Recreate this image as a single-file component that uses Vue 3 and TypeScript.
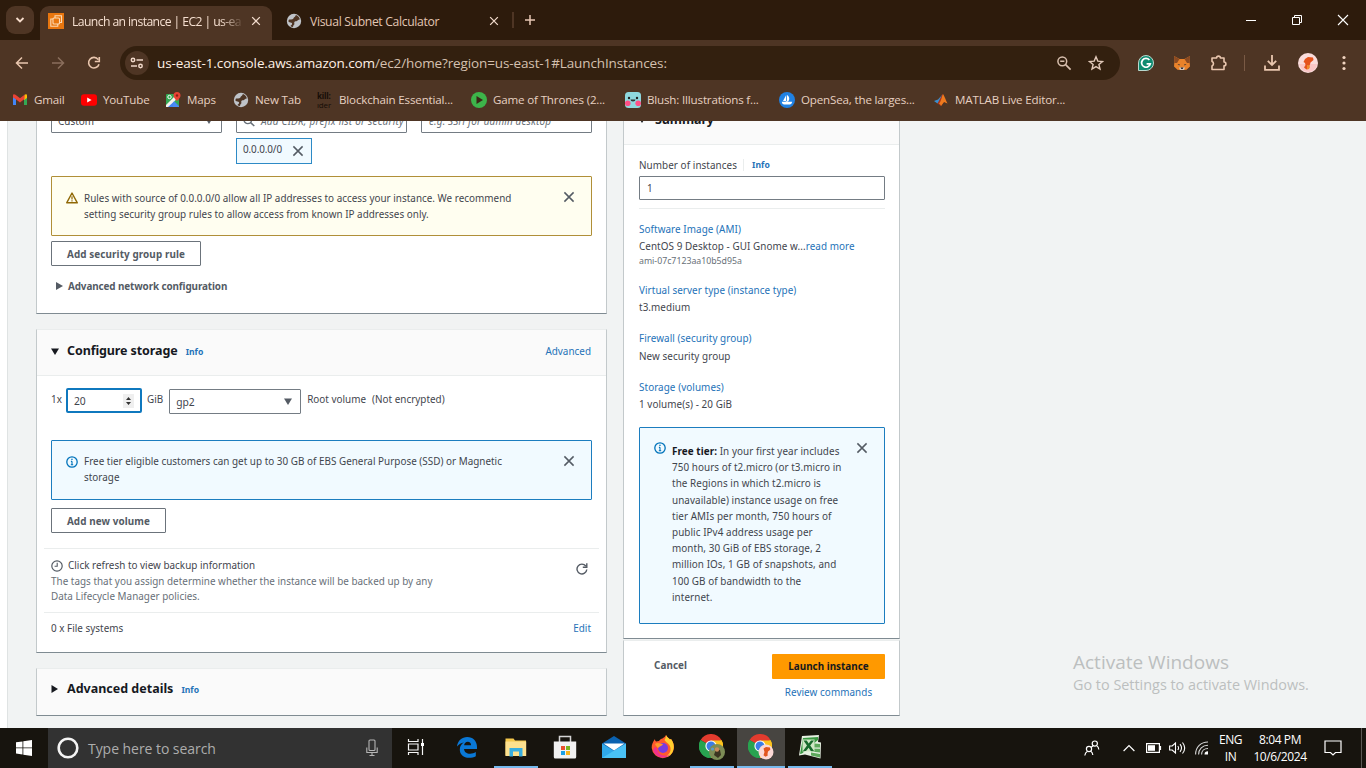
<script setup lang="ts">
interface Field {
  label: string
  value: string
  more?: string
  sub?: string
  cls: string
}

const fields: Field[] = [
  { label: 'Software Image (AMI)', value: 'CentOS 9 Desktop - GUI Gnome w...', more: 'read more', sub: 'ami-07c7123aa10b5d95a', cls: 'f-ami' },
  { label: 'Virtual server type (instance type)', value: 't3.medium', cls: 'f-type' },
  { label: 'Firewall (security group)', value: 'New security group', cls: 'f-fw' },
  { label: 'Storage (volumes)', value: '1 volume(s) - 20 GiB', cls: 'f-vol' },
]

const freeTier: string[] = [
  '750 hours of t2.micro (or t3.micro in',
  'the Regions in which t2.micro is',
  'unavailable) instance usage on free',
  'tier AMIs per month, 750 hours of',
  'public IPv4 address usage per',
  'month, 30 GiB of EBS storage, 2',
  'million IOs, 1 GB of snapshots, and',
  '100 GB of bandwidth to the',
  'internet.',
]
</script>

<template>
  <div class="screen">
    <svg class="defs" width="0" height="0" aria-hidden="true">
      <symbol id="i-close" viewBox="0 0 12 12"><path d="M1.4 1.4l9.2 9.2M10.6 1.4l-9.2 9.2" fill="none" stroke="currentColor" stroke-width="1.5" /></symbol>
      <symbol id="i-info" viewBox="0 0 12 12"><circle cx="6" cy="6" r="5.2" fill="none" stroke="#0073bb" stroke-width="1.3" /><path d="M6 5.2v3.6M4.9 5.4H6M4.8 8.8h2.4" stroke="#0073bb" stroke-width="1.1" fill="none" /><rect x="5.3" y="2.7" width="1.3" height="1.3" fill="#0073bb" /></symbol>
      <symbol id="i-globe" viewBox="0 0 16 16"><circle cx="8" cy="8" r="7.2" fill="#bfc3c8" /><path d="M2.600 7C3.500 5.800 5 6.800 6.500 6.300 7.800 5.800 7.300 4.600 8.600 4 9.600 3.500 9.300 2.600 10 2 12 2.800 13.500 4.500 13.900 6.600 12.800 6.500 12 7.200 11.300 7.800 10.300 8.600 8.800 8 8.300 9.200 7.900 10.300 9 10.900 8 11.800 7.200 12.500 7.300 13.300 6.900 14 5.800 13.800 5 13.400 4.400 12.900 5.500 12.200 6.400 11.400 6 10.300 5.600 9.200 3.600 9.600 2.500 8.800Z" fill="#4e3524" /></symbol>
      <symbol id="i-chrome" viewBox="0 0 24 24"><path d="M12 12 1.600 6A12 12 0 0 1 22.400 6Z" fill="#e33b2e" /><path d="M12 12 22.400 6A12 12 0 0 1 12 24Z" fill="#fcc31e" /><path d="M12 12V24A12 12 0 0 1 1.600 6Z" fill="#28a350" /><path d="M12 6.500H22.700A12 12 0 0 1 12 24l4.800-9.300Z" fill="#fcc31e" /><path d="M1.600 6 7 15l5 3-2 6A12 12 0 0 1 1.600 6Z" fill="#28a350" /><circle cx="12" cy="12" r="5.600" fill="#fff" /><circle cx="12" cy="12" r="4.500" fill="#3c7de6" /></symbol>
    </svg>

    <header class="chrome">
      <div class="tabstrip">
        <div class="tabsearch">
          <svg width="10" height="8" viewBox="0 0 10 8"><path d="M1.500 2l3.500 3.500L8.500 2" fill="none" stroke="#f6dccb" stroke-width="1.800" /></svg>
        </div>
        <div class="tab active">
          <svg class="ec2" width="16" height="16" viewBox="0 0 16 16">
            <rect width="16" height="16" fill="#e8760f" /><path d="M5 6H2.800v7.200h7V11M7 5V2.800h6.500v6.700H11.500" fill="none" stroke="#fbd9b4" stroke-width="1.100" /><rect x="5" y="5" width="6.500" height="6" rx="1" fill="none" stroke="#fbd9b4" stroke-width="1.100" />
          </svg>
          <span class="ttl t-active">Launch an instance | EC2 | us-ea</span>
          <svg class="x" width="10" height="10"><use href="#i-close" /></svg>
        </div>
        <div class="tab idle">
          <svg width="16" height="16"><use href="#i-globe" /></svg>
          <span class="ttl t-idle">Visual Subnet Calculator</span>
          <svg class="x" width="10" height="10"><use href="#i-close" /></svg>
        </div>
        <i class="tabsep"></i>
        <svg class="plus" width="12" height="12" viewBox="0 0 12 12"><path d="M6 1v10M1 6h10" stroke="#e8c8b4" stroke-width="1.500" /></svg>
        <div class="winctl">
          <svg width="12" height="12" viewBox="0 0 12 12"><path d="M1 6.500h10" stroke="#fff" /></svg>
          <svg width="12" height="12" viewBox="0 0 12 12"><path d="M1.500 3.500h7v7h-7zM3.500 3.500v-2h7v7h-2" fill="none" stroke="#fff" /></svg>
          <svg width="12" height="12" viewBox="0 0 12 12"><path d="M1 1l10 10M11 1L1 11" stroke="#fff" stroke-width="1.100" /></svg>
        </div>
      </div>

      <div class="toolbar">
        <svg class="nav" width="14" height="14" viewBox="0 0 14 14"><path d="M13 7H2M7 1.500L1.500 7 7 12.500" fill="none" stroke="#e9c6ae" stroke-width="1.500" /></svg>
        <svg class="nav" width="14" height="14" viewBox="0 0 14 14"><path d="M1 7h11M7 1.500L12.500 7 7 12.500" fill="none" stroke="#8a6e5c" stroke-width="1.500" /></svg>
        <svg class="nav" width="14" height="14" viewBox="0 0 14 14"><path d="M12 8.200A5.300 5.300 0 1 1 11.200 3.600M12.300 1v4.500H7.800" fill="none" stroke="#e9c6ae" stroke-width="1.600" /></svg>
        <div class="omnibox">
          <span class="siteinfo">
            <svg width="14" height="12" viewBox="0 0 14 12"><g fill="none" stroke="#f1d9ca" stroke-width="1.500"><circle cx="3" cy="3" r="1.700" /><path d="M6.500 3H13" /><circle cx="10.500" cy="9" r="1.700" /><path d="M1 9h6" /></g></svg>
          </span>
          <span class="url"><b>us-east-1.console.aws.amazon.com</b>/ec2/home?region=us-east-1#LaunchInstances:</span>
          <svg class="mag" width="16" height="16" viewBox="0 0 16 16"><circle cx="6.300" cy="6.300" r="4.400" fill="none" stroke="#d8bfae" stroke-width="1.500" /><path d="M4.200 6.300h4.200M9.600 9.600l5 5" stroke="#d8bfae" stroke-width="1.600" /></svg>
          <svg width="16" height="16" viewBox="0 0 16 16"><path d="M8 1.800l1.800 4.300 4.700.4-3.600 3 1.100 4.600L8 11.600l-4 2.500 1.100-4.600-3.600-3 4.700-.4Z" fill="none" stroke="#e2c9b9" stroke-width="1.400" /></svg>
        </div>
        <svg class="e1" width="16" height="16" viewBox="0 0 16 16"><path d="M8 .5a7.500 7.500 0 1 1 0 15H.5V8A7.500 7.500 0 0 1 8 .5Z" fill="#0e8a70" stroke="#b9d8ce" /><path d="M11.400 5A4.400 4.400 0 1 0 12.300 8.800H8.600" fill="none" stroke="#fff" stroke-width="1.700" /></svg>
        <svg class="e2" width="18" height="16" viewBox="0 0 18 16"><path d="M1 1l5.500 3h5L17 1l-.3 7 .3 3.500-3.500 3.200L11 15H7l-2.500-.3L1 11.500 1.300 8Z" fill="#e9822a" /><path d="M1 1l5.500 3L4 8H1.300ZM17 1l-5.500 3L14 8h2.700Z" fill="#8a4a22" /><path d="M4.500 9l2.500.6-.8 1ZM13.500 9l-2.500.6.8 1Z" fill="#2b2b35" /><path d="M6 12.500h6L11 15H7Z" fill="#cfc3ba" /><path d="M7.700 12.500h2.600L9.800 14H8.200Z" fill="#2b2b35" /></svg>
        <svg class="e3" width="18" height="18" viewBox="0 0 18 18"><path d="M2 4h4.600a1.900 1.900 0 0 1 3.800 0H14v4a1.900 1.900 0 0 1 0 3.800V15.500H2v-3.600a2.300 2.300 0 0 0 0-4.300Z" fill="none" stroke="#e9c6ae" stroke-width="1.600" stroke-linejoin="round" /></svg>
        <i class="toolsep"></i>
        <svg class="e4" width="16" height="16" viewBox="0 0 16 16"><path d="M8 0v9.500M3.800 5.800L8 10l4.200-4.200M1 10.500v4.300h14v-4.300" fill="none" stroke="#e9c6ae" stroke-width="1.800" /></svg>
        <svg class="e5" width="20" height="20" viewBox="0 0 20 20"><circle cx="10" cy="10" r="10" fill="#fadcdb" /><path d="M1 11h18a9 9 0 0 1-15.500 5Z" fill="#fbc6c6" /><path d="M7 6l3-2 5 .5.500 2.500-3 2.500-.5 2-1 1.500.5 2-3 1.500-2.500-2 1.500-2.500-.5-2-1.500-1Z" fill="#e5521c" /><path d="M9 12l3 .5-1 3.500-2 .5Z" fill="#f08a2c" /></svg>
        <svg class="e6" width="4" height="16" viewBox="0 0 4 16"><g fill="#f1d4c0"><circle cx="2" cy="2.500" r="1.600" /><circle cx="2" cy="8" r="1.600" /><circle cx="2" cy="13.500" r="1.600" /></g></svg>
      </div>

      <div class="bookmarks">
        <div class="bm b1">
          <svg width="16" height="16" viewBox="0 0 16 16"><path d="M1 4v9h3V7Z" fill="#4285f4" /><path d="M12 7v6h3V4Z" fill="#34a853" /><path d="M12 4.500V8l3-2V3.500C15 2 13.500 2 12.500 2.800Z" fill="#fbbc04" /><path d="M1 3.500C1 2 2.500 2 3.500 2.800L8 6.200l4.500-3.400V7L8 10.500 3.500 7 1 5.500Z" fill="#ea4335" /></svg><span>Gmail</span>
        </div>
        <div class="bm b2">
          <svg width="16" height="16" viewBox="0 0 16 16"><rect y="2.300" width="16" height="11.500" rx="3" fill="#f00" /><path d="M6.200 5.500v5L10.600 8Z" fill="#fff" /></svg><span>YouTube</span>
        </div>
        <div class="bm b3">
          <svg width="16" height="16" viewBox="0 0 16 16"><rect x="1" y="2" width="13" height="13" rx="1" fill="#34a853" /><path d="M2 15l6.500-6.500L14 14v1Z" fill="#4285f4" /><path d="M1 13L12 2h2v3L3 15H1Z" fill="#f5f3ee" /><path d="M8.500 9.500L14 15H8Z" fill="#4a8cf5" /><circle cx="4.500" cy="5" r="1.700" fill="none" stroke="#fff" /><path d="M12 0a3.500 3.500 0 0 1 3.500 3.500C15.500 6 12 9 12 9S8.500 6 8.500 3.500A3.500 3.500 0 0 1 12 0Z" fill="#ea4335" /><circle cx="12" cy="3.500" r="1.200" fill="#8c1f17" /></svg><span>Maps</span>
        </div>
        <div class="bm b4"><svg width="16" height="16"><use href="#i-globe" /></svg><span>New Tab</span></div>
        <div class="bm b5"><span class="kill"><em>kill:</em><em class="thin">ıder</em></span><span>Blockchain Essential...</span></div>
        <div class="bm b6">
          <svg width="16" height="16" viewBox="0 0 16 16"><circle cx="8" cy="8" r="8" fill="#3db54a" /><path d="M5.500 4v8L12 8Z" fill="#3a2716" /></svg><span>Game of Thrones (2...</span>
        </div>
        <div class="bm b7">
          <svg width="16" height="16" viewBox="0 0 16 16"><rect width="16" height="16" rx="3.500" fill="#8fd8de" /><circle cx="2.800" cy="11.200" r="2.800" fill="#ff4f86" /><circle cx="13.200" cy="11.200" r="2.800" fill="#ff4f86" /><circle cx="4" cy="6" r="1.200" fill="#222" /><circle cx="12" cy="6" r="1.200" fill="#222" /><path d="M5.500 7.500h5a2.500 2 0 0 1-5 0Z" fill="#333" /></svg><span>Blush: Illustrations f...</span>
        </div>
        <div class="bm b8">
          <svg width="16" height="16" viewBox="0 0 16 16"><circle cx="8" cy="8" r="8" fill="#2081e2" /><path d="M7.200 3v6H4Z M8 3c3 2 2.500 4.500 1.500 6H8Z" fill="#fff" /><path d="M2.800 9.800h4v-.6h2.400v.6h4c-.4 1.800-1.200 2.700-2.400 2.700H5.200c-1.400 0-2.200-1-2.400-2.700Z" fill="#fff" /></svg><span>OpenSea, the larges...</span>
        </div>
        <div class="bm b9">
          <svg width="16" height="16" viewBox="0 0 16 16"><path d="M1 9l4-1.500L9 3 7.500 9 4.500 11.500Z" fill="#3a8fd0" /><path d="M4.500 11.500L9 3l1-1 1.500 7L8 14Z" fill="#a8341c" /><path d="M10 2c1.500 2 3 7 4.500 9.500L11 10 8 14c-.5-1.500-1-2-2-2.500C8 10 9 4 10 2Z" fill="#ee7a1e" /></svg><span>MATLAB Live Editor...</span>
        </div>
      </div>
    </header>

    <main class="page">
      <div class="rail"></div>
      <section class="left">
        <div class="card sec">
          <div class="ruleinputs">
            <div class="inp custom"><span>Custom</span><svg width="8" height="7" viewBox="0 0 8 7"><path d="M0 .5h8L4 7Z" fill="#545b64" /></svg></div>
            <div class="cidrcol">
              <div class="inp cidr">
                <svg width="12" height="12" viewBox="0 0 12 12"><circle cx="4.800" cy="4.800" r="3.800" fill="none" stroke="#687078" stroke-width="1.400" /><path d="M7.600 7.600L11.300 11" stroke="#687078" stroke-width="1.500" /></svg>
                <span class="ph ph-cidr">Add CIDR, prefix list or security</span>
              </div>
              <div class="token"><span>0.0.0.0/0</span><svg width="12" height="12"><use href="#i-close" /></svg></div>
            </div>
            <div class="inp desc"><span class="ph ph-desc">e.g. SSH for admin desktop</span></div>
          </div>
          <div class="alert warn">
            <svg width="12" height="12" viewBox="0 0 12 12"><path d="M6 1L11.300 10.800H.7Z" fill="none" stroke="#906806" stroke-width="1.400" stroke-linejoin="round" /><path d="M6 4.200v3.400M6 8.300v1.300" stroke="#906806" stroke-width="1.200" /></svg>
            <div class="lines"><p class="w1">Rules with source of 0.0.0.0/0 allow all IP addresses to access your instance. We recommend</p><p class="w2">setting security group rules to allow access from known IP addresses only.</p></div>
            <svg class="close" width="12" height="12"><use href="#i-close" /></svg>
          </div>
          <button class="btn rulebtn">Add security group rule</button>
          <div class="advnet"><svg width="7" height="8" viewBox="0 0 7 8"><path d="M0 0v8l7-4Z" fill="#545b64" /></svg><span>Advanced network configuration</span></div>
        </div>

        <div class="card storage">
          <div class="cardhead">
            <svg width="8" height="7" viewBox="0 0 8 7"><path d="M0 .5h8L4 7Z" fill="#16191f" /></svg>
            <h2 class="h-storage">Configure storage</h2><a class="info">Info</a><a class="advlink">Advanced</a>
          </div>
          <div class="volrow">
            <span class="onex">1x</span>
            <div class="size"><span>20</span><i class="spin"><svg width="5" height="8" viewBox="0 0 5 8"><path d="M0 3L2.500 0 5 3ZM0 5l2.500 3L5 5Z" fill="#333" /></svg></i></div>
            <span class="gib">GiB</span>
            <div class="inp gp2"><span>gp2</span><svg width="8" height="7" viewBox="0 0 8 7"><path d="M0 .5h8L4 7Z" fill="#545b64" /></svg></div>
            <span class="root">Root volume</span><span class="enc">(Not encrypted)</span>
          </div>
          <div class="alert note">
            <svg width="12" height="12"><use href="#i-info" /></svg>
            <div class="lines"><p class="w3">Free tier eligible customers can get up to 30 GB of EBS General Purpose (SSD) or Magnetic</p><p class="w4">storage</p></div>
            <svg class="close" width="12" height="12"><use href="#i-close" /></svg>
          </div>
          <button class="btn volbtn">Add new volume</button>
          <div class="backup">
            <div class="btext">
              <p class="bk1"><svg width="12" height="12" viewBox="0 0 12 12"><circle cx="6" cy="6" r="5.200" fill="none" stroke="#545b64" stroke-width="1.200" /><path d="M6.200 2.800v3.500H3.600" fill="none" stroke="#545b64" stroke-width="1.100" /></svg><span>Click refresh to view backup information</span></p>
              <p class="bk2">The tags that you assign determine whether the instance will be backed up by any</p>
              <p class="bk3">Data Lifecycle Manager policies.</p>
            </div>
            <svg class="refresh" width="12" height="12" viewBox="0 0 12 12"><path d="M10.800 6.500A4.900 4.900 0 1 1 9.800 3M10.800.3v4H6.800" fill="none" stroke="#545b64" stroke-width="1.400" /></svg>
          </div>
          <div class="fs"><span>0 x File systems</span><a>Edit</a></div>
        </div>

        <div class="card details">
          <svg width="7" height="8" viewBox="0 0 7 8"><path d="M.5 0v8L7 4Z" fill="#16191f" /></svg>
          <h2 class="h-details">Advanced details</h2><a class="info">Info</a>
        </div>
      </section>

      <aside class="right">
        <div class="card summary">
          <div class="sumhead"><svg width="8" height="7" viewBox="0 0 8 7"><path d="M0 .5h8L4 7Z" fill="#16191f" /></svg><h2 class="h-sum">Summary</h2></div>
          <div class="numrow"><span>Number of instances</span><a class="info">Info</a></div>
          <div class="inp num"><span>1</span></div>
          <div class="hr"></div>
          <div v-for="f in fields" :key="f.label" class="field" :class="f.cls">
            <p class="fl"><a>{{ f.label }}</a></p>
            <p class="fv"><span>{{ f.value }}</span><a v-if="f.more">{{ f.more }}</a></p>
            <p v-if="f.sub" class="fsub">{{ f.sub }}</p>
          </div>
          <div class="alert free">
            <svg width="12" height="12"><use href="#i-info" /></svg>
            <div class="lines">
              <p><b>Free tier:</b> In your first year includes</p>
              <p v-for="l in freeTier" :key="l">{{ l }}</p>
            </div>
            <svg class="close" width="12" height="12"><use href="#i-close" /></svg>
          </div>
        </div>
        <div class="card actions">
          <span class="cancel">Cancel</span>
          <div class="go"><button class="launch">Launch instance</button><a class="review">Review commands</a></div>
        </div>
      </aside>

      <div class="watermark"><p class="wm1">Activate Windows</p><p class="wm2">Go to Settings to activate Windows.</p></div>
    </main>

    <footer class="taskbar">
      <div class="start"><svg width="16" height="16" viewBox="0 0 16 16"><path d="M0 2.300L6.500 1.400V7.500H0ZM7.300 1.300L16 0v7.500H7.300ZM0 8.300h6.500v6.200L0 13.600ZM7.300 8.300H16V16l-8.700-1.300Z" fill="#fff" /></svg></div>
      <div class="search">
        <svg width="22" height="22" viewBox="0 0 22 22"><circle cx="11" cy="11" r="9.300" fill="none" stroke="#f4f4f4" stroke-width="2.600" /></svg>
        <span>Type here to search</span>
        <svg class="mic" width="12" height="18" viewBox="0 0 12 18"><rect x="3" y="1" width="6" height="10.500" rx="1" fill="none" stroke="#b5b5b5" stroke-width="1.100" /><path d="M.8 8.500v5h10.400v-5M6 13.500v3M3.500 16.500h5" fill="none" stroke="#b5b5b5" stroke-width="1.100" /></svg>
      </div>
      <div class="apps">
        <div class="app"><svg width="18" height="18" viewBox="0 0 18 18"><g fill="none" stroke="#f5f5f5" stroke-width="1.200"><path d="M1.500 1v2.500h9.500V1M1.500 17v-2.500h9.500V17M1.500 6h9.500v6H1.500ZM15.500 1v16" /></g><rect x="14" y="5" width="3" height="3" fill="#fff" /></svg></div>
        <div class="app"><svg width="22" height="22" viewBox="0 0 22 22"><path d="M1 10.500C1.800 4.500 6 1 11.200 1 17 1 21 5.200 21 10.800V13H8c.3 3.200 2.800 4.700 6 4.700 2.300 0 4.200-.6 5.800-1.600v4.100C18 21.200 15.500 21.800 13 21.800 7.500 21.800 3.800 18.500 3.800 13.500c0-3 1.500-5.600 4-7C5.200 6.900 3 8.300 1 10.500ZM8.100 9.300h7C15 7 13.800 5.700 11.800 5.700S8.500 7 8.100 9.300Z" fill="#0a78d6" /></svg></div>
        <div class="app run"><svg width="22" height="20" viewBox="0 0 22 20"><path d="M.5 1.500h8l1.500 2h11v15H.5Z" fill="#f5c84c" /><path d="M.5 4.500h20.700v14.500H.5Z" fill="#fde18f" /><path d="M4.500 11h13v8.500h-3.500V14.500H8v5H4.500Z" fill="#38aee0" /></svg></div>
        <div class="app"><svg width="24" height="24" viewBox="0 0 24 24"><path d="M6.500 7V1.500h11V7" fill="none" stroke="#d5d5d5" stroke-width="1.500" /><path d="M.8 6.500h22.400V22a1.500 1.500 0 0 1-1.500 1.500H2.300A1.500 1.500 0 0 1 .8 22Z" fill="#f1f1f1" /><rect x="8" y="11" width="4" height="4" fill="#e8512e" /><rect x="13" y="11" width="4" height="4" fill="#7bb41f" /><rect x="8" y="16" width="4" height="4" fill="#1ba0e4" /><rect x="13" y="16" width="4" height="4" fill="#f7b41c" /></svg></div>
        <div class="app"><svg width="24" height="22" viewBox="0 0 24 22"><path d="M0 7.500L12 0l12 7.500V22H0Z" fill="#0b62b0" /><path d="M0 7.500L12 15l12-7.500V22H0Z" fill="#2fa8ea" /><path d="M0 22L24 7.500V22Z" fill="#49c1f5" /><path d="M1.500 7.500h21L12 14.500Z" fill="#fff" /></svg></div>
        <div class="app"><svg width="24" height="24" viewBox="0 0 24 24"><path d="M4 4c0 1.500.5 2 1 2.500L8 6c2-3 5-2 7-6 .5 2 3 3 4 4.500l1-.5c2 2.500 3.300 5.500 3 9a11.200 11.200 0 0 1-22.300 0C.5 9.500 2 6.500 4 4Z" fill="#ff5a2e" /><path d="M15 0c.5 2 3 3 4 4.500l1-.5c3.500 4.500 3.500 10 1 14-2 3-5 4-7 4 4-2 6-5 5.500-9C19 9 16 8.500 13.500 5 14.500 3.500 15 2 15 0Z" fill="#ffcf2e" /><path d="M2 15c1.500 5 6 8 11 7.500 3-.3 5-1.500 6-3-3 2-8 1.500-10.500-1C6 16 6.500 12 4 12Z" fill="#f0308f" /><circle cx="12" cy="13" r="5" fill="#7a3be0" /><path d="M4 9c3-2 5 0 8 0-1 2.500-4 2-4.500 4C6 12.500 5 11 4 9Z" fill="#ff9a2a" /></svg></div>
        <div class="app run"><svg width="28" height="28" viewBox="0 0 28 28"><use href="#i-chrome" x="1" y="1" width="24" height="24" /><circle cx="19" cy="19" r="8" fill="#7c8c55" /><path d="M16 22l2-6 4 1 1 5-3 3Z" fill="#3b3420" /><circle cx="19" cy="16.500" r="2.200" fill="#c98c5c" /><circle cx="14.500" cy="16" r="1.600" fill="#5c9ccb" /></svg></div>
        <div class="app run on"><svg width="28" height="28" viewBox="0 0 28 28"><use href="#i-chrome" x="1" y="1" width="24" height="24" /><circle cx="19" cy="19" r="7.500" fill="#fbd9d6" /><path d="M16.500 15.500l2.500-1.500 4 .5.300 2.300-2.300 1.700-.5 2.500.3 1.500-2.300 1.300-2-1.500 1-3.300Z" fill="#e2551f" /></svg></div>
        <div class="app run"><svg width="24" height="24" viewBox="0 0 24 24"><path d="M4 1L21 0l-1 7 3 .5-.5 16L7 19.500 1 20.500Z" fill="#e7f1e2" /><path d="M12 8l10 1v3.500H12ZM13 13.500l9 .3v3.700l-9-1ZM13 17.500l9 1.500v3.500l-9-2Z" fill="#5da85c" /><path d="M5 3l15-1v3L4 18.500l-2 .5Z" fill="#3a9742" /><path d="M4.500 4.500h12v12h-12Z" fill="#cfe6c4" /><path d="M5.500 5.500h3.200l2 3 2.300-3h3l-3.800 5 3.800 5.500h-3.200l-2.200-3.300L8 16H5l4-5.500Z" fill="#17692b" /></svg></div>
      </div>
      <div class="tray">
        <svg class="people" width="16" height="16" viewBox="0 0 16 16"><g fill="none" stroke="#fff" stroke-width="1.200"><circle cx="10.800" cy="3.600" r="2.600" /><path d="M9 5.800l-2 1.700M12.700 5.800c1.500.8 2 2 2.100 3.700" /><circle cx="5" cy="9" r="2.600" /><path d="M3.500 11.200C2 12 1 13.500.8 15.500M6.700 11.200c1.500.8 2 2 2.100 3.800" /></g></svg>
        <svg class="up" width="12" height="8" viewBox="0 0 12 8"><path d="M.6 7L6 1.600 11.400 7" fill="none" stroke="#fff" stroke-width="1.200" /></svg>
        <svg class="bat" width="16" height="10" viewBox="0 0 16 10"><path d="M.6.600h12.800v8.800H.6ZM14.500 3v4" fill="none" stroke="#fff" stroke-width="1.200" /><rect x="2" y="2.200" width="7" height="5.600" fill="#fff" /></svg>
        <svg class="vol" width="17" height="14" viewBox="0 0 17 14"><g fill="none" stroke="#fff" stroke-width="1.100"><path d="M.6 5v4h2.600l3.300 3V2L3.200 5ZM8.800 5c1 1.300 1 2.700 0 4M11 3.200c2 2.500 2 5.100 0 7.600M13.500 1.500c2.800 3.500 2.800 7.500 0 11" /></g></svg>
        <svg class="wifi" width="14" height="14" viewBox="0 0 14 14"><g fill="none" stroke="#d8d8d8" stroke-width="1.100"><path d="M.6 13.500C.6 6 6 1 13 1M3.600 13.500C3.600 8 7.500 4.300 13 4.300M6.600 13.500c0-3.500 2.500-6 6.400-6" /></g><path d="M9.500 13.500c0-2 1.200-3.200 3.500-3.200v3.200Z" fill="#fff" /></svg>
        <div class="lang"><span>ENG</span><span>IN</span></div>
        <div class="clock"><span>8:04 PM</span><span class="date">10/6/2024</span></div>
        <svg class="notif" width="18" height="16" viewBox="0 0 18 16"><path d="M1 1h16v11.500h-5.500L9 15l-2.500-2.500H1Z" fill="none" stroke="#fff" stroke-width="1.200" /></svg>
        <i class="edge"></i>
      </div>
    </footer>
  </div>
</template>

<style>
html, body { margin: 0; overflow: hidden; }
</style>

<style scoped>
* { box-sizing: border-box; }
p, h2 { margin: 0; white-space: nowrap; }
svg { display: block; flex: none; }
span, a { white-space: nowrap; }
.screen { width: 1366px; height: 768px; display: flex; flex-direction: column; overflow: hidden; font-family: "Noto Sans", "Open Sans", sans-serif; font-size: 9.900px; letter-spacing: 0.02px; color: #3f454d; }
.defs { position: absolute; }
a { color: #2472b8; }

/* browser frame */
.chrome { height: 121px; background: #4e3524; font-family: "Open Sans", "Noto Sans", sans-serif; flex: none; }
.tabstrip { height: 40px; background: #2d1b0c; display: flex; align-items: center; }
.tabsearch { width: 28px; height: 28px; margin-left: 6px; border-radius: 9px; background: #4e3524; display: flex; align-items: center; justify-content: center; }
.tab { height: 34px; margin-top: 6px; display: flex; align-items: center; padding-bottom: 6px; font-size: 12.200px; letter-spacing: -0.35px; }
.active { width: 232px; margin-left: 6px; background: #4e3524; border-radius: 9px 9px 0 0; padding: 0 11px 5px 8px; color: #f5dfd0; }
.idle { width: 228px; padding: 0 1px 5px 14px; color: #e2c6b3; }
.ttl { margin-left: 8px; position: relative; top: 1px; }
.t-active { letter-spacing: -0.59px; mask-image: linear-gradient(90deg, #000 88%, transparent 102%); }
.x { margin-left: auto; color: #f2dccd; }
.tabsep { width: 2px; height: 16px; background: #4e3524; margin-left: 12px; }
.plus { margin-left: 10px; }
.winctl { margin-left: auto; display: flex; gap: 34px; padding-right: 17px; }
.toolbar { height: 46px; display: flex; align-items: center; }
.nav { margin-left: 22px; }
.nav:first-child { margin-left: 15px; }
.omnibox { width: 1000px; height: 34px; border-radius: 17px; margin-left: 19px; background: #33200f; display: flex; align-items: center; padding: 0 16px 0 5px; }
.siteinfo { width: 24px; height: 24px; border-radius: 50%; background: #4e3524; display: flex; align-items: center; justify-content: center; }
.url { margin-left: 8px; font-size: 13.500px; letter-spacing: -0.12px; color: #d5c0b0; }
.url b { font-weight: 400; color: #fff0e6; }
.mag { margin-left: auto; margin-right: 16px; }
.e1 { margin-left: 18px; } .e2 { margin-left: 19px; } .e3 { margin-left: 19px; }
.toolsep { width: 1px; height: 16px; background: #7a5a45; margin-left: 16px; }
.e4 { margin-left: 19px; } .e5 { margin-left: 18px; } .e6 { margin-left: 24px; }
.bookmarks { height: 28px; position: relative; display: flex; align-items: center; font-size: 11.600px; letter-spacing: -0.17px; color: #e6d0c1; }
.bm { display: flex; align-items: center; gap: 6px; flex: none; }
.bm > span { margin-top: -1px; }
.b1 { width: 69px; margin-left: 12px; } .b2 { width: 84px; } .b3 { width: 68px; } .b4 { width: 84px; } .b5 { width: 154px; } .b6 { width: 154px; } .b7 { width: 154px; } .b8 { width: 154px; }
.bm > .kill { width: 16px; height: 18px; overflow: hidden; display: flex; flex-direction: column; color: #150d07; font-size: 8px; line-height: 9px; }
.kill em { font-style: normal; font-weight: 700; }
.kill .thin { font-weight: 400; }

/* console page */
.page { height: 607px; flex: none; display: flex; align-items: flex-start; background: #f1f3f3; overflow: hidden; position: relative; }
.rail { width: 8px; height: 607px; background: #fff; border-right: 1px solid #dfe3e3; flex: none; }
.left { width: 571px; margin-left: 28px; flex: none; }
.right { width: 277px; margin-left: 16px; flex: none; letter-spacing: 0.07px; }
.card { background: #fff; border: 1px solid #c3c9cb; border-top-color: #eaeded; border-bottom-color: #7f8b92; }
.inp { border: 1px solid #747c84; border-radius: 1px; background: #fff; display: flex; align-items: center; }
.ph { font-style: italic; color: #687078; }
.ph-cidr { letter-spacing: 0.26px; }
.ph-desc { letter-spacing: 0.16px; }
.sec { height: 193px; border-top: 0; padding: 0 14px; display: flow-root; }
.ruleinputs { height: 56px; display: flex; margin-top: -13px; }
.custom { width: 171px; height: 25px; padding: 0 8px 0 6px; justify-content: space-between; }
.cidrcol { width: 171px; margin-left: 14px; }
.cidr { height: 25px; padding-left: 6px; gap: 6px; }
.desc { width: 171px; height: 25px; margin-left: 14px; padding-left: 7px; }
.token { width: 76px; height: 26px; margin-top: 5px; border: 1px solid #2d8ac6; background: #f1faff; display: flex; align-items: center; justify-content: space-between; padding: 0 7px 0 6px; }
.token span { position: relative; top: -2px; letter-spacing: -0.1px; }
.token svg { color: #545b64; }
.alert { display: flex; border: 1px solid; border-radius: 1px; padding: 13px 0 0 14px; width: 541px; height: 60px; }
.alert .lines { margin-left: 6px; }
.alert > svg:first-child { margin-top: 2px; }
.alert .close { color: #545b64; margin: 1px 16px 0 auto; }
.lines p { line-height: 16px; }
.warn { background: #fffef0; border-color: #b08f38; margin-top: 12px; }
.note { background: #f1faff; border-color: #1c7dbf; }
.note .lines { margin-top: -1px; }
.btn { font-family: inherit; font-size: 9.900px; font-weight: 700; color: #545b64; background: #fff; border: 1px solid #6b737b; border-radius: 1px; height: 25px; padding: 0; display: block; white-space: nowrap; letter-spacing: 0.1px; }
.rulebtn { width: 150px; margin-top: 5px; }
.advnet { display: flex; align-items: center; margin-top: 11px; height: 18px; padding-left: 5px; gap: 5px; font-weight: 700; color: #545b64; letter-spacing: -0.1px; }
.storage { margin-top: 15px; height: 324px; }
.cardhead { height: 46px; background: #fafafa; border-bottom: 1px solid #eaeded; display: flex; align-items: center; padding: 0 15px 3px 14px; }
h2 { font-size: 12.500px; line-height: 16px; font-weight: 700; color: #16191f; margin-left: 8px; letter-spacing: -0.1px; }
.info { font-size: 8.600px; font-weight: 700; margin-left: 8px; position: relative; top: 1px; }
.advlink { margin-left: auto; }
.volrow { height: 64px; padding: 12px 14px 0; display: flex; align-items: flex-start; line-height: 22px; }
.size { width: 76px; height: 25px; margin-left: 4px; border: 2px solid #0f78be; border-radius: 2px; display: flex; align-items: center; padding-left: 6px; font-size: 10.300px; }
.spin { margin-left: auto; margin-right: 6px; width: 11px; height: 14px; background: #efefef; display: flex; align-items: center; justify-content: center; }
.gib { margin-left: 5px; }
.gp2 { width: 132px; height: 25px; margin: 1px 0 0 6px; justify-content: space-between; padding: 0 8px 0 6px; font-size: 10.300px; }
.root { margin-left: 6px; } .enc { margin-left: 6px; }
.note { margin: 0 14px; }
.volbtn { width: 115px; margin: 8px 14px 0; }
.backup { margin: 15px 7px 0; height: 65px; border-top: 1px solid #eaeded; border-bottom: 1px solid #eaeded; display: flex; padding: 9px 11px 0 7px; }
.backup p { line-height: 15.700px; }
.bk1 { display: flex; align-items: center; gap: 5px; }
.bk2, .bk3 { color: #687078; }
.refresh { margin: 5px 0 0 auto; }
.fs { display: flex; justify-content: space-between; padding: 0 15px 0 14px; line-height: 30px; }
.details { margin-top: 15px; height: 48px; background: #fafafa; display: flex; align-items: center; padding: 0 14px 6px; }
.h-details { letter-spacing: 0; margin-left: 9px; }

.summary { height: 518px; border-top: 0; padding: 0 14px 0 15px; }
.sumhead { height: 24px; margin: 0 -14px 0 -15px; padding: 0 14px; background: #fafafa; border-bottom: 1px solid #eaeded; display: flex; align-items: flex-start; }
.sumhead h2 { margin: -9px 0 0 9px; }
.sumhead svg { margin-top: -5px; }
.numrow { height: 31px; padding-top: 8px; display: flex; align-items: center; }
.numrow .info { top: 0; border-left: 1px solid #eaeded; margin-left: 6px; padding-left: 8px; }
.num { height: 24px; width: 246px; padding: 0 0 1px 7px; }
.hr { height: 1px; background: #eaeded; margin: 8px 0 12px; }
.field p { line-height: 16px; }
.field .fsub { font-size: 8.750px; line-height: 14px; color: #687078; letter-spacing: 0; }
.f-ami { height: 61px; } .f-ami .fv { margin-top: 1px; }
.f-type { height: 48px; } .f-type .fv { margin-top: 1px; }
.f-fw { height: 49px; } .f-fw .fv { margin-top: 2px; }
.f-vol { height: 48px; } .f-vol .fv { margin-top: 1px; }
.free { width: 246px; height: 197px; background: #f1faff; border-color: #1c7dbf; }
.free .lines p { line-height: 16.200px; }
.free .lines { margin-top: 2px; }
.alert.free > svg:first-child { margin-top: 1px; }
.free b { color: #16191f; }
.alert.free .close { margin-right: 16px; }
.actions { margin-top: 1px; height: 76px; padding: 13px 14px 0 30px; display: flex; }
.cancel { font-weight: 700; color: #545b64; line-height: 22px; }
.go { margin-left: auto; width: 113px; text-align: center; }
.launch { width: 113px; height: 25px; border: 0; border-radius: 1px; background: #ff9900; color: #16191f; font-family: inherit; font-size: 9.900px; font-weight: 700; padding: 0 0 2px; display: block; white-space: nowrap; letter-spacing: 0; }
.review { display: block; line-height: 27px; }
.watermark { position: absolute; left: 1073px; top: 529px; font-family: "Open Sans", sans-serif; color: #bcbfbf; }
.wm1 { font-size: 19px; line-height: 24px; letter-spacing: 0; }
.wm2 { font-size: 14.400px; line-height: 22px; letter-spacing: 0; }

/* taskbar */
.taskbar { height: 40px; flex: none; background: #17140e; display: flex; font-family: "Open Sans", sans-serif; color: #fff; }
.start { width: 48px; display: flex; align-items: center; justify-content: center; }
.search { width: 344px; background: #323232; display: flex; align-items: center; padding: 0 14px 0 9px; color: #adadad; font-size: 14px; letter-spacing: -0.05px; }
.search span { margin-left: 9px; }
.mic { margin-left: auto; }
.apps { display: flex; gap: 1px; }
.app { width: 48px; height: 40px; display: flex; align-items: center; justify-content: center; border-bottom: 2px solid transparent; }
.run { border-image: linear-gradient(90deg, transparent 4px, #76b9ed 4px, #76b9ed 44px, transparent 44px) 2; }
.on { background: #474541; border-image: linear-gradient(#76b9ed, #76b9ed) 2; }
.app:first-child { margin-right: 2px; }
.tray { margin-left: auto; display: flex; align-items: center; font-size: 12px; letter-spacing: -0.4px; }
.up { margin-left: 23px; } .bat { margin-left: 11px; } .vol { margin-left: 7px; } .wifi { margin-left: 9px; }
.lang, .clock { display: flex; flex-direction: column; align-items: center; line-height: 17px; }
.lang { margin-left: 9px; width: 25px; } .clock { width: 54px; margin-left: 10px; }
.notif { margin-left: 17px; }
.edge { width: 1px; height: 40px; background: #5a5854; margin: 0 4px 0 19px; }
</style>
